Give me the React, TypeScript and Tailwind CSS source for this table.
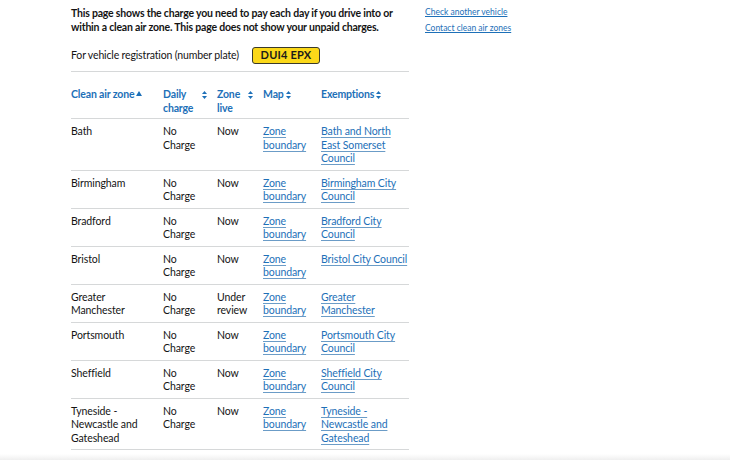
import React from "react";

const font = { fontFamily: 'Lato, "Noto Sans", Arial, sans-serif' };

function Both() {
  return (
    <svg width="5" height="8" viewBox="0 0 5 8" className="shrink-0 mt-[3px]">
      <polygon points="2.5,0 5,3 0,3" fill="#1d70b8" />
      <polygon points="2.5,8 5,5 0,5" fill="#1d70b8" />
    </svg>
  );
}
function Up() {
  return (
    <svg width="6" height="6" viewBox="0 0 6 6" className="shrink-0 mt-[3px]">
      <polygon points="3,0 6,5 0,5" fill="#1d70b8" />
    </svg>
  );
}

const rows = [
  { zone: ["Bath"], live: ["Now"], ex: ["Bath and North", "East Somerset", "Council"] },
  { zone: ["Birmingham"], live: ["Now"], ex: ["Birmingham City", "Council"] },
  { zone: ["Bradford"], live: ["Now"], ex: ["Bradford City", "Council"] },
  { zone: ["Bristol"], live: ["Now"], ex: ["Bristol City Council"] },
  { zone: ["Greater", "Manchester"], live: ["Under", "review"], ex: ["Greater", "Manchester"] },
  { zone: ["Portsmouth"], live: ["Now"], ex: ["Portsmouth City", "Council"] },
  { zone: ["Sheffield"], live: ["Now"], ex: ["Sheffield City", "Council"] },
  { zone: ["Tyneside -", "Newcastle and", "Gateshead"], live: ["Now"], ex: ["Tyneside -", "Newcastle and", "Gateshead"] },
];

function Lines({ lines }: { lines: string[] }) {
  return (
    <>
      {lines.map((l, i) => (
        <React.Fragment key={i}>
          {l}
          {i < lines.length - 1 && <br />}
        </React.Fragment>
      ))}
    </>
  );
}

const cols = "grid grid-cols-[92px_54px_46px_58px_88px] whitespace-nowrap";

export default function App() {
  return (
    <div className="w-[730px] h-[460px] bg-white overflow-hidden relative text-[#141414]" style={font}>
      <div className="flex pl-[71px]">
        <div className="w-[338px]">
          <p className="pt-[6px] text-[10.5px] leading-[14px] font-bold whitespace-nowrap tracking-[-0.2px]">
            This page shows the charge you need to pay each day if you drive into or
            <br />
            within a clean air zone. This page does not show your unpaid charges.
          </p>
          <div className="flex items-center mt-[13px] h-[17px] text-[10.5px] tracking-[-0.15px] whitespace-nowrap">
            <span className="w-[181px]">For vehicle registration (number plate)</span>
            <span className="w-[68px] h-[17px] rounded-[3px] border border-[#3a3a2a] bg-[#fbd819] flex items-center justify-center font-bold text-[11px] tracking-[0.2px] text-[#1a1a1a]">
              DUI4 EPX
            </span>
          </div>
          <div className="mt-[7px] border-t border-[#d6d8d9]" />
          <div className={`${cols} pt-[16px] pb-[3px] border-b border-[#d6d8d9] text-[10.5px] tracking-[-0.15px] leading-[13.5px] font-bold text-[#1d70b8]`}>
            <div className="flex items-start gap-[2px]">
              <span>Clean air zone</span>
              <Up />
            </div>
            <div className="flex items-start justify-between pr-[10px]">
              <span>
                Daily
                <br />
                charge
              </span>
              <Both />
            </div>
            <div className="flex items-start justify-between pr-[10px]">
              <span>
                Zone
                <br />
                live
              </span>
              <Both />
            </div>
            <div className="flex items-start gap-[2px]">
              <span>Map</span>
              <Both />
            </div>
            <div className="flex items-start gap-[2px]">
              <span>Exemptions</span>
              <Both />
            </div>
          </div>
          {rows.map((r, i) => (
            <div key={i} className={`${cols} pt-[6px] pb-[4px] border-b border-[#d6d8d9] text-[10.5px] tracking-[-0.1px] leading-[13.5px]`}>
              <div><Lines lines={r.zone} /></div>
              <div>
                No
                <br />
                Charge
              </div>
              <div><Lines lines={r.live} /></div>
              <div className="text-[#1d70b8] underline decoration-[#6b9cc7] underline-offset-[2px]">
                Zone
                <br />
                boundary
              </div>
              <div className="text-[#1d70b8] underline decoration-[#6b9cc7] underline-offset-[2px]">
                <Lines lines={r.ex} />
              </div>
            </div>
          ))}
        </div>
        <div className="ml-[16px] pt-[6px] flex flex-col gap-[4px] text-[8.5px] leading-[12px] text-[#1d70b8] whitespace-nowrap">
          <span className="underline underline-offset-[1px]">Check another vehicle</span>
          <span className="underline underline-offset-[1px]">Contact clean air zones</span>
        </div>
      </div>
      <div className="absolute left-0 right-0 bottom-0 h-[6px] bg-gradient-to-b from-white to-[#efefef]" />
    </div>
  );
}
